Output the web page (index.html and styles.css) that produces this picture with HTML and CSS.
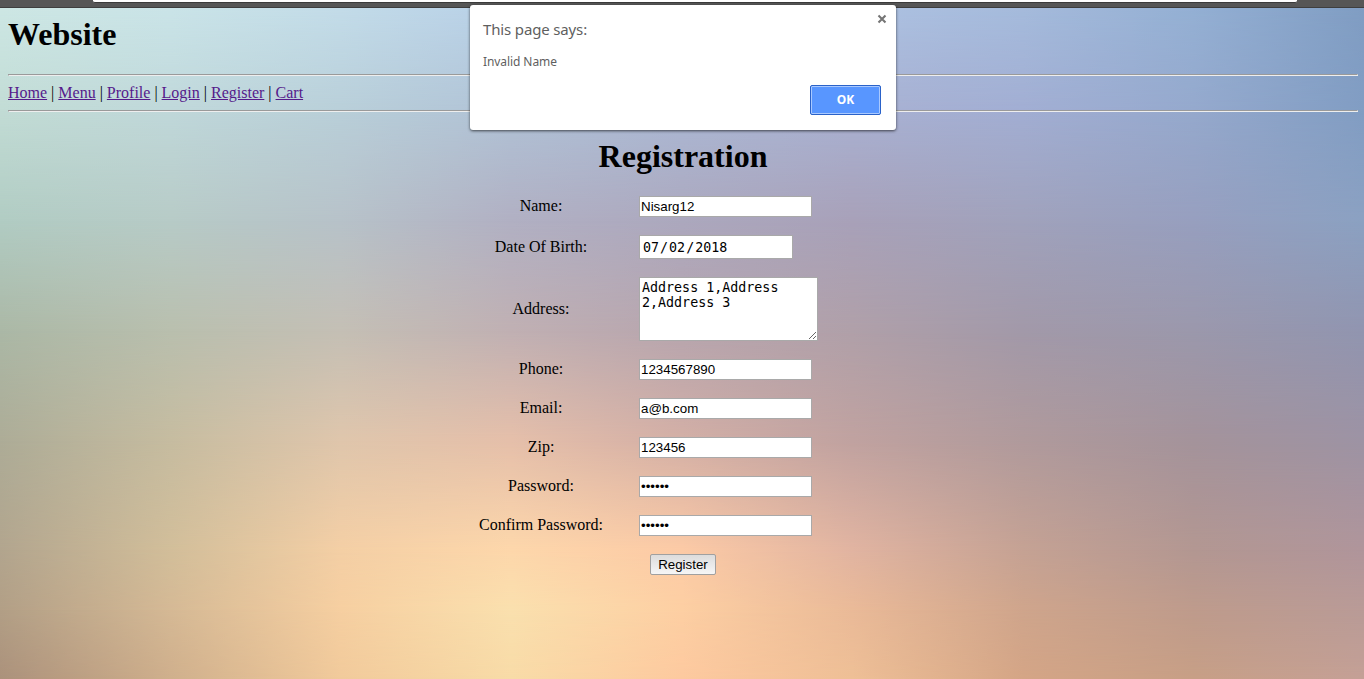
FILE: index.html
```html
<!DOCTYPE html>
<html lang="en">
<head>
<meta charset="utf-8">
<title>Website</title>
<link rel="stylesheet" href="styles.css">
</head>
<body>
<div class="backdrop" aria-hidden="true">
  <div class="tone tone-1"></div>
  <div class="tone tone-2"></div>
  <div class="tone tone-3"></div>
  <div class="tone tone-4"></div>
  <div class="tone tone-5"></div>
  <div class="tone tone-6"></div>
  <div class="tone tone-7"></div>
  <div class="tone tone-8"></div>
</div>
<div class="browser-bar"><div class="address-bar"></div></div>
<main class="page">
  <h1 class="site-title">Website</h1>
  <hr class="rule">
  <nav class="nav"><a href="#">Home</a> | <a href="#">Menu</a> | <a href="#">Profile</a> | <a href="#">Login</a> | <a href="#">Register</a> | <a href="#">Cart</a></nav>
  <hr class="rule">
  <h1 class="form-title">Registration</h1>
  <form class="form">
    <div class="fields">
      <label for="name">Name:</label><input id="name" class="field" type="text" value="Nisarg12">
      <label>Date Of Birth:</label><div class="field date"><span class="date-part">07</span>/<span class="date-part">02</span>/<span class="date-part">2018</span></div>
      <label for="address">Address:</label><textarea id="address" class="field area" spellcheck="false">Address 1,Address 2,Address 3</textarea>
      <label for="phone">Phone:</label><input id="phone" class="field" type="text" value="1234567890">
      <label for="email">Email:</label><input id="email" class="field" type="text" value="a@b.com">
      <label for="zip">Zip:</label><input id="zip" class="field" type="text" value="123456">
      <label for="pass">Password:</label><input id="pass" class="field" type="password" value="abcdef">
      <label for="confirm">Confirm Password:</label><input id="confirm" class="field" type="password" value="abcdef">
    </div>
    <button class="submit" type="button">Register</button>
  </form>
</main>
<div class="alert" role="alertdialog">
  <div class="alert-head">
    <div class="alert-title">This page says:</div>
    <svg class="alert-close" width="10" height="10" viewBox="0 0 10 10"><path d="M1.5 1.5 8.5 8.5M8.5 1.5 1.5 8.5" fill="none" stroke="#757575" stroke-width="2.1"/></svg>
  </div>
  <div class="alert-text">Invalid Name</div>
  <button class="alert-ok" type="button">OK</button>
</div>
</body>
</html>
```

FILE: styles.css
```css
* { box-sizing: border-box; }
html, body { height: 100%; overflow: hidden; }
body { margin: 0; color: #000; font: 16px "Liberation Serif", serif; }

/* Stacked horizontal blends, each fading in below the previous one */
.backdrop { position: absolute; inset: 0; z-index: -1; }
.tone {
  position: absolute; inset: 0;
  background: linear-gradient(90deg, var(--c));
  -webkit-mask-image: linear-gradient(transparent var(--from), #000 var(--to));
  mask-image: linear-gradient(transparent var(--from), #000 var(--to));
}
.tone-1 { --from: -1px; --to: 0px; --c: #cde7e4, #cae4e8, #c3dce9, #b8d0e8, #b2c8e6, #aec2e2, #a5bbdc, #94b0d4, #809dc3; }
.tone-2 { --from: 8px; --to: 110px; --c: #c2dcd5, #c0d8da, #b9cfd9, #b0c2d6, #abb8d4, #a9b1d2, #a2aed3, #95a9cd, #819dc3; }
.tone-3 { --from: 110px; --to: 220px; --c: #b1ccc3, #b7cbc7, #b7c2c9, #b1b0c3, #aca8be, #a8a1b9, #a0a2bc, #979fbf, #8ba1c2; }
.tone-4 { --from: 220px; --to: 330px; --c: #abb8a6, #b9bfae, #c4bfb5, #c0b0b3, #b7a5ae, #b0a0a9, #a299a9, #9b98ac, #9195b0; }
.tone-5 { --from: 330px; --to: 440px; --c: #adac97, #c6bca0, #dfc6ac, #e5bfaa, #d3afa6, #c0a2a0, #b09a9c, #a4939b, #9d93a4; }
.tone-6 { --from: 440px; --to: 550px; --c: #b2a58e, #d2be9a, #f4cfa5, #fdd7ab, #fccaa6, #e1b4a1, #c5a294, #b39792, #b0959b; }
.tone-7 { --from: 550px; --to: 610px; --c: #b29f86, #d5b995, #f6cfa1, #fae0ae, #fdcfa3, #eaba98, #cfa58c, #be9b8c, #b99b97; }
.tone-8 { --from: 610px; --to: 679px; --c: #ab917b, #cfaf8c, #f1ca9b, #f8dba7, #fdc99f, #eebf96, #d4a586, #c79f86, #c4a096; }

.browser-bar { height: 8px; padding: 0 67px 0 93px; background: #565656; border-bottom: 1px solid #3e3e3e; }
.address-bar { height: 3px; background: #fff; border-bottom: 1px solid #3b3b3b; border-radius: 0 0 2px 2px; }

.page { padding: 8px 6px 0 8px; }
.site-title, .form-title { margin: 0; font-size: 32px; line-height: 37px; font-weight: bold; }
.rule { margin: 0; height: 2px; border: 1px solid; border-color: #9a9a9a #eee #eee #9a9a9a; }
.site-title { margin-bottom: 21px; }
.nav { padding: 8px 0; line-height: 18px; }
.nav a { color: #551a8b; }
.form-title { margin: 26px 0 21px; text-align: center; }

.form { display: flex; flex-direction: column; align-items: center; gap: 18px; }
.fields { display: grid; grid-template-columns: 124px 248px; column-gap: 36px; row-gap: 18px; align-items: center; justify-items: start; }
.fields label { justify-self: center; line-height: 18px; white-space: nowrap; margin-top: -1px; }
.field { width: 173px; height: 21px; margin: 0; padding: 1px; border: 1px solid #a9a9a9; border-radius: 0; background: #fff; color: #000; font: 13.333px "Liberation Sans", sans-serif; outline: none; }
.date { width: 154px; height: 24px; padding: 1px 2px 0; font-family: "DejaVu Sans Mono", monospace; line-height: 22px; }
.date-part { padding: 0 1px; }
.area { display: block; width: 179px; height: 64px; padding: 2px; font-family: "DejaVu Sans Mono", monospace; line-height: 15px; }
.submit { width: 66px; height: 21px; padding: 0; border: 1px solid #a0a0a0; border-radius: 2px; background: linear-gradient(#dcdcdc, #f6f6f6); color: #000; font: 13.333px "Liberation Sans", sans-serif; }

.alert {
  position: absolute; left: 470px; top: 5px; width: 426px; height: 125px;
  padding: 9px 15px 15px 13px; display: flex; flex-direction: column;
  background: #fff; border-radius: 3px; box-shadow: 0 1px 3px rgba(0,0,0,.65);
  color: #5f5f5f; font-family: "Noto Sans", sans-serif;
}
.alert-head { display: flex; justify-content: space-between; margin-right: -6px; }
.alert-title { padding: 5px 0 1px; font-size: 15px; line-height: 20px; letter-spacing: -.15px; }
.alert-text { margin-top: 13px; font-size: 12px; line-height: 17px; letter-spacing: -.08px; }
.alert-ok { align-self: flex-end; margin-top: 15px; width: 71px; height: 30px; padding: 0 0 2px; border: 1px solid #2a62c9; border-radius: 2px; box-shadow: inset 0 0 0 1px #a9c9ff; background: #5896ff; color: #fff; font: bold 12px "Noto Sans", sans-serif; letter-spacing: .1px; }
```
